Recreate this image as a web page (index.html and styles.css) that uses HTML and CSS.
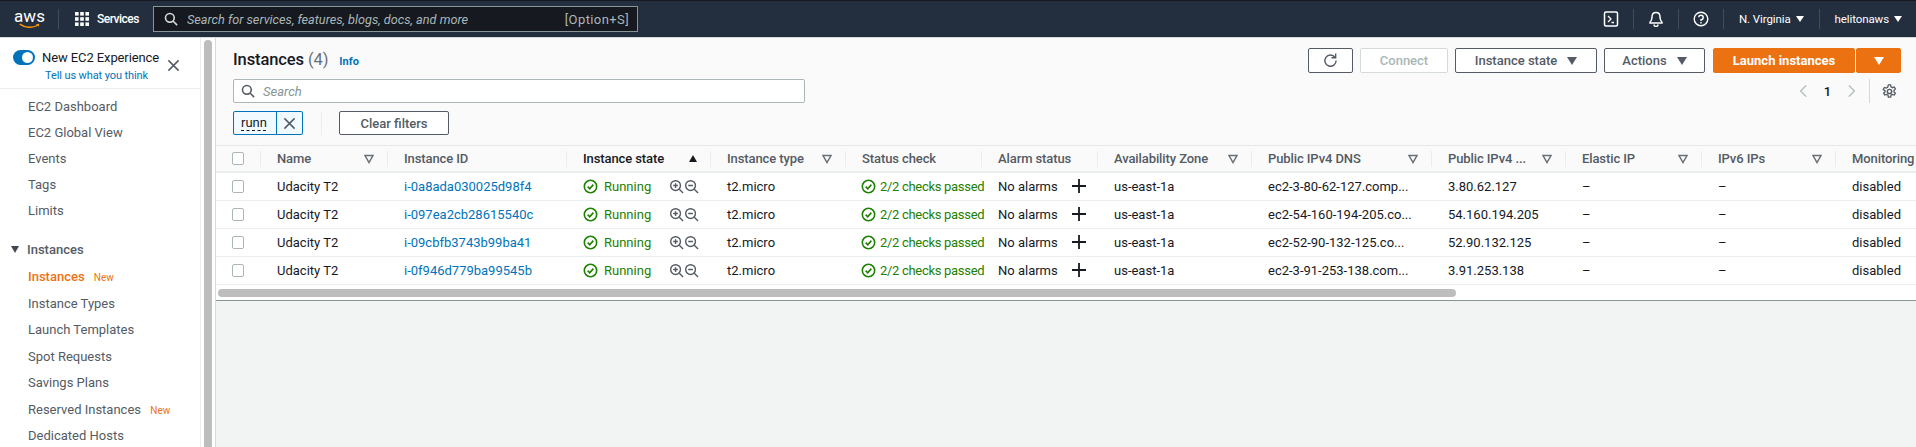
FILE: index.html
```html
<!DOCTYPE html>
<html>
	<head>
		<meta charset="utf-8">
		<title>Instances | EC2 Management Console</title>
		<link rel="stylesheet" href="styles.css">
	</head>
	<body>
		<svg class="defs" width="0" height="0">
			<symbol id="ok" viewBox="0 0 16 16"><circle cx="8" cy="8" r="6.6" fill="none" stroke="currentColor" stroke-width="1.7"/><path d="M5 8.2l2.2 2.2L11 6" fill="none" stroke="currentColor" stroke-width="1.7"/></symbol>
			<symbol id="zoomin" viewBox="0 0 16 16"><circle cx="7" cy="7" r="5.2" fill="none" stroke="currentColor" stroke-width="1.5"/><path d="M11 11l4 4M4.5 7h5M7 4.500v5" fill="none" stroke="currentColor" stroke-width="1.500"/></symbol>
			<symbol id="zoomout" viewBox="0 0 16 16"><circle cx="7" cy="7" r="5.2" fill="none" stroke="currentColor" stroke-width="1.5"/><path d="M11 11l4 4M4.5 7h5" fill="none" stroke="currentColor" stroke-width="1.500"/></symbol>
			<symbol id="plus" viewBox="0 0 14 14"><path d="M7 0v14M0 7h14" fill="none" stroke="currentColor" stroke-width="1.8"/></symbol>
			<symbol id="filter" viewBox="0 0 10 10"><path d="M1 1.500h8L5 8.500z" fill="none" stroke="currentColor" stroke-width="1.500"/></symbol>
			<symbol id="cross" viewBox="0 0 14 14"><path d="M1.500 1.500l11 11M12.500 1.500l-11 11" fill="none" stroke="currentColor" stroke-width="1.600"/></symbol>
			<symbol id="mag" viewBox="0 0 16 16"><circle cx="6.700" cy="6.700" r="5" fill="none" stroke="currentColor" stroke-width="1.800"/><path d="M10.500 10.500l4.500 4.500" fill="none" stroke="currentColor" stroke-width="1.800"/></symbol>
		</svg>

		<header class="topbar">
			<div class="logo">
				<span class="logo-text">aws</span>
				<svg class="logo-smile" viewBox="0 0 28 8"><path d="M1 1.500c7 5 17 5.500 24 1.500" fill="none" stroke="#f90" stroke-width="1.800"/><path d="M22.500 1.500l4.500-.5-1 4z" fill="#f90"/></svg>
			</div>
			<span class="topbar-sep sep-logo"></span>
			<svg class="grid-icon" viewBox="0 0 14 14" fill="#fff"><rect width="3.600" height="3.600"/><rect x="5.200" width="3.600" height="3.600"/><rect x="10.400" width="3.600" height="3.600"/><rect y="5.200" width="3.600" height="3.600"/><rect x="5.200" y="5.200" width="3.600" height="3.600"/><rect x="10.400" y="5.200" width="3.600" height="3.600"/><rect y="10.400" width="3.600" height="3.600"/><rect x="5.200" y="10.400" width="3.600" height="3.600"/><rect x="10.400" y="10.400" width="3.600" height="3.600"/></svg>
			<span class="services">Services</span>
			<div class="global-search">
				<svg class="ico-14"><use href="#mag"/></svg>
				<span class="global-search-text">Search for services, features, blogs, docs, and more</span>
				<span class="global-search-key">[Option+S]</span>
			</div>
			<div class="topbar-right">
				<svg class="top-icon" viewBox="0 0 16 16"><rect x="1.500" y="1" width="13" height="14" rx="1.500" fill="none" stroke="#fff" stroke-width="1.500"/><path d="M5 5l3 3-3 3M8.500 11.500H11" fill="none" stroke="#fff" stroke-width="1.300"/></svg>
				<span class="topbar-sep"></span>
				<svg class="top-icon" viewBox="0 0 16 16"><path d="M8 1.500c-2.800 0-4 2-4 4.500 0 2.500-.8 4-2 5.200v.8h12v-.8C12.800 10 12 8.500 12 6c0-2.500-1.200-4.500-4-4.500z" fill="none" stroke="#fff" stroke-width="1.500"/><path d="M6 13.500a2 2 0 0 0 4 0" fill="none" stroke="#fff" stroke-width="1.500"/></svg>
				<span class="topbar-sep"></span>
				<svg class="top-icon" viewBox="0 0 16 16"><circle cx="8" cy="8" r="6.800" fill="none" stroke="#fff" stroke-width="1.400"/><path d="M5.800 6.300A2.200 2.200 0 1 1 8 8.600v1.500" fill="none" stroke="#fff" stroke-width="1.400"/><rect x="7.300" y="11" width="1.400" height="1.500" fill="#fff"/></svg>
				<span class="topbar-sep"></span>
				<span class="top-menu">N. Virginia <i class="caret-small"></i></span>
				<span class="topbar-sep"></span>
				<span class="top-menu">helitonaws <i class="caret-small"></i></span>
			</div>
		</header>

		<div class="page">
			<aside class="sidebar">
				<div class="experience">
					<span class="toggle"></span>
					<div class="experience-text">
						<div class="experience-title">New EC2 Experience</div>
						<a class="experience-link">Tell us what you think</a>
					</div>
					<svg class="experience-close"><use href="#cross"/></svg>
				</div>
				<ul class="nav">
					<li>EC2 Dashboard</li>
					<li>EC2 Global View</li>
					<li>Events</li>
					<li>Tags</li>
					<li>Limits</li>
				</ul>
				<div class="nav-section"><i class="caret-nav"></i>Instances</div>
				<ul class="nav nav-instances">
					<li class="active">Instances <span class="new">New</span></li>
					<li>Instance Types</li>
					<li>Launch Templates</li>
					<li>Spot Requests</li>
					<li>Savings Plans</li>
					<li>Reserved Instances <span class="new">New</span></li>
					<li>Dedicated Hosts</li>
				</ul>
			</aside>
			<div class="side-scroll"><span class="side-thumb"></span></div>

			<main class="main">
				<section class="panel">
					<div class="panel-top">
						<h1 class="title">Instances <span class="count">(4)</span> <a class="info">Info</a></h1>
						<div class="actions">
							<button class="btn btn-refresh"><svg viewBox="0 0 16 16"><path d="M12.800 4.500A6 6 0 1 0 14 8" fill="none" stroke="currentColor" stroke-width="1.500"/><path d="M13.500 .5v4.500H9" fill="none" stroke="currentColor" stroke-width="1.500"/></svg></button>
							<button class="btn btn-connect">Connect</button>
							<button class="btn btn-state">Instance state <i class="caret"></i></button>
							<button class="btn btn-actions">Actions <i class="caret"></i></button>
							<div class="launch">
								<button class="btn btn-launch">Launch instances</button>
								<button class="btn btn-launch-caret"><i class="caret"></i></button>
							</div>
						</div>
					</div>
					<div class="panel-search">
						<div class="search">
							<svg class="ico-14"><use href="#mag"/></svg>
							<span>Search</span>
						</div>
						<div class="pager">
							<svg class="chev" viewBox="0 0 10 16"><path d="M9 1L2 8l7 7" fill="none" stroke="currentColor" stroke-width="1.500"/></svg>
							<span class="page-num">1</span>
							<svg class="chev" viewBox="0 0 10 16"><path d="M1 1l7 7-7 7" fill="none" stroke="currentColor" stroke-width="1.500"/></svg>
							<span class="pager-sep"></span>
							<svg class="gear" viewBox="0 0 16 16"><circle cx="8" cy="8" r="2.300" fill="none" stroke="currentColor" stroke-width="1.500"/><path d="M6.800 1h2.400l.4 2 1.600.9 1.900-.7 1.200 2.100-1.500 1.300v1.800l1.500 1.300-1.200 2.100-1.900-.7-1.600.9-.4 2H6.800l-.4-2-1.600-.9-1.900.7-1.200-2.100 1.500-1.300V7.100L1.300 5.800l1.200-2.100 1.900.7 1.600-.9z" fill="none" stroke="currentColor" stroke-width="1.400"/></svg>
						</div>
					</div>
					<div class="panel-filters">
						<div class="token">
							<span class="token-text">runn</span>
							<span class="token-x"><svg><use href="#cross"/></svg></span>
						</div>
						<span class="filter-sep"></span>
						<button class="btn btn-clear">Clear filters</button>
					</div>
				</section>

				<div class="table-wrap">
					<table class="grid">
						<colgroup>
							<col class="c0"><col class="c1"><col class="c2"><col class="c3"><col class="c4"><col class="c5"><col class="c6"><col class="c7"><col class="c8"><col class="c9"><col class="c10"><col class="c11"><col class="c12">
						</colgroup>
						<thead>
							<tr>
								<th class="check"><span class="box"></span></th>
								<th><div class="th">Name<svg class="fil"><use href="#filter"/></svg></div></th>
								<th><div class="th">Instance ID</div></th>
								<th class="sorted"><div class="th">Instance state<i class="sort-up"></i></div></th>
								<th><div class="th">Instance type<svg class="fil"><use href="#filter"/></svg></div></th>
								<th><div class="th">Status check</div></th>
								<th><div class="th">Alarm status</div></th>
								<th><div class="th">Availability Zone<svg class="fil"><use href="#filter"/></svg></div></th>
								<th><div class="th">Public IPv4 DNS<svg class="fil"><use href="#filter"/></svg></div></th>
								<th><div class="th">Public IPv4 ...<svg class="fil"><use href="#filter"/></svg></div></th>
								<th><div class="th">Elastic IP<svg class="fil"><use href="#filter"/></svg></div></th>
								<th><div class="th">IPv6 IPs<svg class="fil"><use href="#filter"/></svg></div></th>
								<th class="last"><div class="th">Monitoring</div></th>
							</tr>
						</thead>
						<tbody>
							<tr>
								<td class="check"><span class="box"></span></td>
								<td>Udacity T2</td>
								<td><a class="link">i-0a8ada030025d98f4</a></td>
								<td><div class="state"><svg class="ok"><use href="#ok"/></svg><span class="green">Running</span><span class="zooms"><svg><use href="#zoomin"/></svg><svg><use href="#zoomout"/></svg></span></div></td>
								<td>t2.micro</td>
								<td class="status"><div class="state"><svg class="ok"><use href="#ok"/></svg><span class="green">2/2 checks passed</span></div></td>
								<td><div class="alarm">No alarms<svg><use href="#plus"/></svg></div></td>
								<td>us-east-1a</td>
								<td>ec2-3-80-62-127.comp...</td>
								<td>3.80.62.127</td>
								<td>–</td>
								<td>–</td>
								<td>disabled</td>
							</tr>
							<tr>
								<td class="check"><span class="box"></span></td>
								<td>Udacity T2</td>
								<td><a class="link">i-097ea2cb28615540c</a></td>
								<td><div class="state"><svg class="ok"><use href="#ok"/></svg><span class="green">Running</span><span class="zooms"><svg><use href="#zoomin"/></svg><svg><use href="#zoomout"/></svg></span></div></td>
								<td>t2.micro</td>
								<td class="status"><div class="state"><svg class="ok"><use href="#ok"/></svg><span class="green">2/2 checks passed</span></div></td>
								<td><div class="alarm">No alarms<svg><use href="#plus"/></svg></div></td>
								<td>us-east-1a</td>
								<td>ec2-54-160-194-205.co...</td>
								<td>54.160.194.205</td>
								<td>–</td>
								<td>–</td>
								<td>disabled</td>
							</tr>
							<tr>
								<td class="check"><span class="box"></span></td>
								<td>Udacity T2</td>
								<td><a class="link">i-09cbfb3743b99ba41</a></td>
								<td><div class="state"><svg class="ok"><use href="#ok"/></svg><span class="green">Running</span><span class="zooms"><svg><use href="#zoomin"/></svg><svg><use href="#zoomout"/></svg></span></div></td>
								<td>t2.micro</td>
								<td class="status"><div class="state"><svg class="ok"><use href="#ok"/></svg><span class="green">2/2 checks passed</span></div></td>
								<td><div class="alarm">No alarms<svg><use href="#plus"/></svg></div></td>
								<td>us-east-1a</td>
								<td>ec2-52-90-132-125.co...</td>
								<td>52.90.132.125</td>
								<td>–</td>
								<td>–</td>
								<td>disabled</td>
							</tr>
							<tr>
								<td class="check"><span class="box"></span></td>
								<td>Udacity T2</td>
								<td><a class="link">i-0f946d779ba99545b</a></td>
								<td><div class="state"><svg class="ok"><use href="#ok"/></svg><span class="green">Running</span><span class="zooms"><svg><use href="#zoomin"/></svg><svg><use href="#zoomout"/></svg></span></div></td>
								<td>t2.micro</td>
								<td class="status"><div class="state"><svg class="ok"><use href="#ok"/></svg><span class="green">2/2 checks passed</span></div></td>
								<td><div class="alarm">No alarms<svg><use href="#plus"/></svg></div></td>
								<td>us-east-1a</td>
								<td>ec2-3-91-253-138.com...</td>
								<td>3.91.253.138</td>
								<td>–</td>
								<td>–</td>
								<td>disabled</td>
							</tr>
						</tbody>
					</table>
				</div>
				<div class="hscroll"><span class="hscroll-thumb"></span></div>
				<div class="split"></div>
			</main>
		</div>
	</body>
</html>
```

FILE: styles.css
```css
*{
	margin: 0;
	padding: 0;
	box-sizing: border-box;
	list-style: none;
}
html,body{
	height: 100%;
	overflow: hidden;
}
body{
	font-family: Roboto, "Liberation Sans", sans-serif;
	font-size: 13px;
	color: #16191f;
	background: #fff;
}
.defs{
	position: absolute;
}

/* top bar */
.topbar{
	height: 38px;
	background: #232f3e;
	border-top: 1px solid #16191f;
	border-bottom: 1px solid #d5dbdb;
	display: flex;
	align-items: center;
	color: #fff;
	padding-left: 16px;
}
.logo{
	width: 27px;
	height: 20px;
	display: flex;
	flex-direction: column;
	align-items: center;
	flex-shrink: 0;
}
.logo-text{
	font-size: 17px;
	line-height: 14px;
}
.logo-smile{
	width: 27px;
	height: 7px;
}
.topbar-sep{
	width: 1px;
	height: 20px;
	background: #414d5c;
	flex-shrink: 0;
}
.sep-logo{
	margin-left: 15px;
}
.grid-icon{
	width: 14px;
	height: 14px;
	margin-left: 16px;
	flex-shrink: 0;
}
.services{
	margin-left: 8px;
	width: 39px;
	font-weight: 500;
	font-size: 12px;
	letter-spacing: -.5px;
	white-space: nowrap;
}
.global-search{
	margin-left: 17px;
	width: 485px;
	height: 26px;
	background: #16191f;
	border: 1px solid #879596;
	display: flex;
	align-items: center;
	padding: 0 8px 0 10px;
	color: #d5dbdb;
}
.ico-14{
	width: 14px;
	height: 14px;
	flex-shrink: 0;
}
.global-search-text{
	margin-left: 9px;
	font-size: 12.7px;
	font-style: italic;
	color: #aab7b8;
	flex: 1;
}
.global-search-key{
	color: #aab7b8;
	letter-spacing: .4px;
}
.topbar-right{
	margin-left: auto;
	display: flex;
	align-items: center;
}
.top-icon{
	width: 16px;
	height: 16px;
	margin: 0 14px;
}
.top-menu{
	font-size: 11.5px;
	letter-spacing: -.1px;
	padding: 0 15px;
	display: flex;
	align-items: center;
	gap: 5px;
	white-space: nowrap;
}
.top-menu:last-child{
	padding-right: 14px;
}
.caret-small{
	border-left: 4px solid transparent;
	border-right: 4px solid transparent;
	border-top: 6px solid #fff;
}

/* layout */
.page{
	display: flex;
	height: 409px;
}

/* left nav */
.sidebar{
	width: 201px;
	flex-shrink: 0;
	border-right: 1px solid #eaeded;
	overflow: hidden;
}
.experience{
	height: 51px;
	border-bottom: 1px solid #eaeded;
	display: flex;
	padding: 12px 0 0 13px;
}
.toggle{
	width: 22px;
	height: 15px;
	background: #0073bb;
	border-radius: 8px;
	position: relative;
	flex-shrink: 0;
}
.toggle::after{
	content: "";
	position: absolute;
	right: 2px;
	top: 2px;
	width: 11px;
	height: 11px;
	border-radius: 50%;
	background: #fff;
}
.experience-text{
	margin-left: 7px;
	width: 125px;
	flex-shrink: 0;
}
.experience-title{
	line-height: 16px;
	letter-spacing: -.1px;
	white-space: nowrap;
}
.experience-link{
	display: block;
	font-size: 11px;
	color: #0073bb;
	margin: 3px 0 0 3px;
	line-height: 14px;
	letter-spacing: -.1px;
	white-space: nowrap;
}
.experience-close{
	width: 13px;
	height: 13px;
	margin-top: 9px;
	color: #545b64;
}
.nav{
	padding-left: 28px;
	padding-top: 5px;
	color: #545b64;
}
.nav li{
	height: 26px;
	line-height: 26px;
	white-space: nowrap;
}
.nav-instances li{
	height: 26.5px;
}
.nav li.active{
	color: #ec7211;
	font-weight: 500;
}
.new{
	color: #ec7211;
	font-size: 10px;
	font-weight: 400;
	margin-left: 6px;
}
.nav-section{
	margin-top: 12px;
	display: flex;
	align-items: center;
	font-weight: 500;
	color: #545b64;
	height: 26px;
	padding-left: 11px;
}
.nav-section + .nav{
	padding-top: 2px;
}
.caret-nav{
	border-left: 4.500px solid transparent;
	border-right: 4.500px solid transparent;
	border-top: 7px solid #414750;
	margin-right: 8px;
}
.side-scroll{
	width: 14px;
	flex-shrink: 0;
	padding: 2px 3px 0;
	background: #fff;
}
.side-thumb{
	display: block;
	height: 100%;
	width: 8px;
	background: #bdbdbd;
	border-radius: 4px 4px 0 0;
}

/* main */
.main{
	flex: 1;
	min-width: 0;
	background: #f2f3f3;
	border-left: 1px solid #d5dbdb;
}
.panel{
	height: 108px;
	background: #fafafa;
	border-bottom: 1px solid #e5e8e8;
	padding: 10px 15px 0 17px;
}
.panel-top{
	display: flex;
	justify-content: space-between;
	height: 25px;
}
.title{
	font-size: 16.5px;
	font-weight: 500;
	line-height: 24px;
	letter-spacing: -.1px;
}
.count{
	font-weight: 400;
	color: #687078;
}
.info{
	font-size: 11px;
	font-weight: 700;
	color: #0073bb;
	margin-left: 7px;
	letter-spacing: 0;
}
.actions{
	display: flex;
	gap: 7px;
}
.btn{
	height: 25px;
	background: #fff;
	border: 1px solid #545b64;
	border-radius: 2px;
	font-family: inherit;
	font-size: 13px;
	font-weight: 500;
	color: #545b64;
	display: flex;
	align-items: center;
	justify-content: center;
}
.caret{
	border-left: 5px solid transparent;
	border-right: 5px solid transparent;
	border-top: 8px solid currentColor;
	margin-left: 10px;
}
.btn-refresh{
	width: 45px;
}
.btn-refresh svg{
	width: 15px;
	height: 15px;
}
.btn-connect{
	width: 88px;
	border-color: #d5dbdb;
	color: #aab7b8;
}
.btn-state{
	width: 142px;
}
.btn-actions{
	width: 101px;
}
.launch{
	margin-left: 1px;
	display: flex;
	gap: 1px;
}
.btn-launch{
	width: 142px;
	background: #ec7211;
	border-color: #ec7211;
	color: #fff;
	font-weight: 700;
}
.btn-launch-caret{
	width: 45px;
	background: #ec7211;
	border-color: #ec7211;
	color: #fff;
}
.btn-launch-caret .caret{
	margin: 0;
}
.panel-search{
	display: flex;
	justify-content: space-between;
	margin-top: 6px;
	height: 24px;
}
.search{
	width: 572px;
	height: 24px;
	background: #fff;
	border: 1px solid #aab7b8;
	border-radius: 2px;
	display: flex;
	align-items: center;
	padding-left: 7px;
	color: #545b64;
}
.search span{
	margin-left: 8px;
	font-style: italic;
	color: #879596;
}
.pager{
	display: flex;
	align-items: center;
	color: #aab7b8;
}
.chev{
	width: 8px;
	height: 16px;
}
.page-num{
	width: 41px;
	text-align: center;
	color: #16191f;
	font-weight: 500;
}
.pager-sep{
	width: 1px;
	height: 24px;
	background: #d5dbdb;
	margin: 0 12px 0 13px;
}
.gear{
	width: 15px;
	height: 15px;
	color: #545b64;
	margin-right: 4px;
}
.panel-filters{
	display: flex;
	align-items: center;
	margin-top: 8px;
	height: 24px;
}
.token{
	width: 70px;
	height: 24px;
	background: #f1faff;
	border: 1px solid #0073bb;
	border-radius: 2px;
	display: flex;
}
.token-text{
	width: 42px;
	padding-left: 7px;
	line-height: 22px;
	text-decoration: underline dashed;
	text-underline-offset: 3px;
	text-decoration-thickness: 1px;
}
.token-x{
	border-left: 1px solid #0073bb;
	flex: 1;
	display: flex;
	align-items: center;
	justify-content: center;
	color: #545b64;
}
.token-x svg{
	width: 13px;
	height: 13px;
}
.filter-sep{
	width: 1px;
	height: 24px;
	background: #eaeded;
	margin: 0 17px 0 18px;
}
.btn-clear{
	width: 110px;
	height: 24px;
}

/* table */
.table-wrap{
	overflow: hidden;
	background: #fff;
}
.grid{
	table-layout: fixed;
	border-collapse: collapse;
	width: 1750px;
}
.c0{width: 45px;}
.c1{width: 127px;}
.c2{width: 179px;}
.c3{width: 144px;}
.c4{width: 135px;}
.c5{width: 136px;}
.c6{width: 116px;}
.c7{width: 154px;}
.c8{width: 180px;}
.c9{width: 134px;}
.c10{width: 136px;}
.c11{width: 134px;}
.c12{width: 130px;}
.grid th{
	height: 26px;
	background: #fafafa;
	border-bottom: 2px solid #eaeded;
	font-weight: 500;
	color: #545b64;
	text-align: left;
	padding: 0 0 0 16px;
	white-space: nowrap;
	letter-spacing: -.1px;
}
.grid th.sorted{
	color: #16191f;
}
.th{
	display: flex;
	align-items: center;
	justify-content: space-between;
	padding-right: 13px;
	height: 16px;
	border-right: 1px solid #eaeded;
}
.last .th{
	border-right: 0;
}
.grid th.check,.grid td.check{
	padding: 0 0 0 16px;
}
th.check{
	position: relative;
}
th.check::after{
	content: "";
	position: absolute;
	right: 0;
	top: 5px;
	height: 16px;
	width: 1px;
	background: #eaeded;
}
.box{
	display: block;
	width: 12px;
	height: 13px;
	background: #fff;
	border: 1px solid #aab7b8;
	border-radius: 2px;
}
.fil{
	width: 10px;
	height: 10px;
	color: #687078;
	flex-shrink: 0;
}
.sort-up{
	border-left: 4.500px solid transparent;
	border-right: 4.500px solid transparent;
	border-bottom: 7px solid #16191f;
}
.grid td{
	height: 28px;
	border-bottom: 1px solid #eaeded;
	padding: 0 0 0 16px;
	white-space: nowrap;
	overflow: hidden;
	background: #fff;
}
.grid td.status{
	padding-left: 15px;
	letter-spacing: -.3px;
	overflow: visible;
}
.link{
	color: #0073bb;
}
.state{
	display: flex;
	align-items: center;
}
.ok{
	width: 15px;
	height: 15px;
	color: #1d8102;
	flex-shrink: 0;
	margin-right: 6px;
}
.status .ok{
	margin-right: 4px;
}
.green{
	color: #1d8102;
	white-space: nowrap;
}
.zooms{
	display: flex;
	margin-left: 18px;
	color: #545b64;
}
.zooms svg{
	width: 15px;
	height: 15px;
}
.alarm{
	display: flex;
	align-items: center;
	justify-content: space-between;
	width: 88px;
}
.alarm svg{
	width: 14px;
	height: 14px;
	color: #16191f;
}
.hscroll{
	height: 15px;
	background: #fff;
	padding: 4px 2px 3px;
}
.hscroll-thumb{
	display: block;
	width: 1238px;
	height: 8px;
	border-radius: 4px;
	background: #bdbdbd;
}
.split{
	height: 1px;
	background: #879596;
}
```
